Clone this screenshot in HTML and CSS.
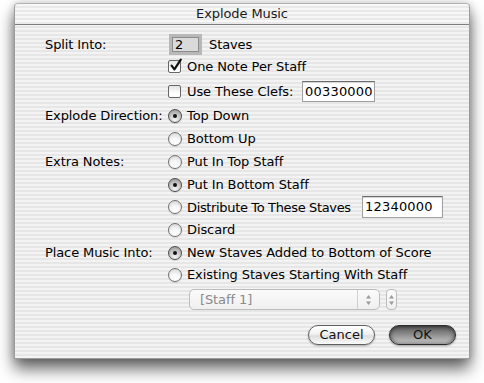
FILE: index.html
```html
<!DOCTYPE html>
<html>
<head>
<meta charset="utf-8">
<link rel="stylesheet" href="styles.css">
</head>
<body>
<div class="window">
  <div class="titlebar">Explode Music</div>
  <div class="content">
    <div class="form">
      <div class="label">Split Into:</div>
      <div class="ctl"><span class="field focus">2</span><span class="after">Staves</span></div>

      <div class="label"></div>
      <div class="ctl"><span class="check"><svg class="tick" width="14" height="14" viewBox="0 0 14 14"><path d="M2.6 6.6 L5.4 10.4 L11.8 0.6" fill="none" stroke="#111" stroke-width="2.2" stroke-linecap="round" stroke-linejoin="round"/></svg></span><span class="text">One Note Per Staff</span></div>

      <div class="label"></div>
      <div class="ctl"><span class="check"></span><span class="text w-clefs">Use These Clefs:</span><span class="field f-clefs">00330000</span></div>

      <div class="label">Explode Direction:</div>
      <div class="ctl"><span class="radio on"></span><span class="text r">Top Down</span></div>

      <div class="label"></div>
      <div class="ctl"><span class="radio"></span><span class="text r">Bottom Up</span></div>

      <div class="label">Extra Notes:</div>
      <div class="ctl"><span class="radio"></span><span class="text r">Put In Top Staff</span></div>

      <div class="label"></div>
      <div class="ctl"><span class="radio on"></span><span class="text r">Put In Bottom Staff</span></div>

      <div class="label"></div>
      <div class="ctl"><span class="radio"></span><span class="text r w-dist">Distribute To These Staves</span><span class="field f-dist">12340000</span></div>

      <div class="label"></div>
      <div class="ctl"><span class="radio"></span><span class="text r">Discard</span></div>

      <div class="label">Place Music Into:</div>
      <div class="ctl"><span class="radio on"></span><span class="text r">New Staves Added to Bottom of Score</span></div>

      <div class="label"></div>
      <div class="ctl"><span class="radio"></span><span class="text r">Existing Staves Starting With Staff</span></div>
    </div>

    <div class="popup-row">
      <div class="popup">
        <span class="popup-text">[Staff 1]</span>
        <span class="popup-arrows"><svg width="7" height="12" viewBox="0 0 7 12"><path d="M3.5 1 L6 4.5 L1 4.5 Z M3.5 11 L6 7.5 L1 7.5 Z" fill="#9a9a9a"/></svg></span>
      </div>
      <div class="stepper"><svg width="7" height="14" viewBox="0 0 7 14"><path d="M3.5 2 L6 5.5 L1 5.5 Z M3.5 12 L6 8.5 L1 8.5 Z" fill="#9a9a9a"/></svg></div>
    </div>

    <div class="buttons">
      <div class="btn cancel">Cancel</div>
      <div class="btn ok">OK</div>
    </div>
  </div>
</div>
</body>
</html>
```
FILE: styles.css
```css
html, body {
  margin: 0;
  padding: 0;
  background: #ffffff;
}
body {
  width: 484px;
  height: 383px;
  overflow: hidden;
  font-family: "DejaVu Sans", "Noto Sans", sans-serif;
  font-size: 13px;
  letter-spacing: -0.1px;
  color: #000;
}
.window {
  margin-left: 14px;
  margin-top: 3px;
  width: 456px;
  height: 356px;
  box-sizing: border-box;
  border: 1px solid #9c9c9c;
  border-top-color: #b4b4b4;
  background: repeating-linear-gradient(to bottom, #f3f3f3 0, #f3f3f3 2px, #e6e6e6 2px, #e6e6e6 4px);
  box-shadow: 0 10px 16px rgba(0,0,0,0.6), 0 0 8px rgba(0,0,0,0.2);
  border-radius: 4px 4px 0 0;
}
.titlebar {
  height: 20px;
  line-height: 20px;
  text-align: center;
  border-bottom: 1px solid #7c7c7c;
  color: #1a1a1a;
  background: repeating-linear-gradient(to bottom, #f7f7f7 0, #f7f7f7 2px, #e9e9e9 2px, #e9e9e9 4px);
  border-radius: 4px 4px 0 0;
}
.content {
  padding: 8px 13px 0 30px;
}
.form {
  display: grid;
  grid-template-columns: 123px 1fr;
  grid-template-rows: 22px 23px 26px 23px 23px 23px 23px 22px 23px 23px 21px;
  align-items: center;
}
.label {
  white-space: nowrap;
}
.ctl {
  display: flex;
  align-items: center;
  white-space: nowrap;
}
.field {
  box-sizing: border-box;
  height: 21px;
  line-height: 19px;
  background: #fff;
  border: 1px solid #a0a0a0;
  border-top-color: #6c6c6c;
  box-shadow: inset 0 1px 1px rgba(0,0,0,0.18);
  padding-left: 2px;
  letter-spacing: 0.2px;
  flex: none;
}
.field.focus {
  margin-left: 1px;
  width: 33px;
  border: 3px solid #b8b8b8;
  box-shadow: inset 0 0 0 1px #8c8c8c;
  background: #dadada;
  line-height: 15px;
  padding-left: 3px;
}
.after {
  margin-left: 7px;
}
.f-clefs {
  width: 73px;
}
.f-dist {
  width: 81px;
  height: 22px;
  line-height: 20px;
}
.check {
  position: relative;
  width: 13px;
  height: 13px;
  box-sizing: border-box;
  border: 1px solid #666;
  border-radius: 2px;
  background: linear-gradient(#e4e4e4, #ffffff 70%);
  flex: none;
}
.tick {
  position: absolute;
  left: 0;
  top: -2px;
  overflow: visible;
}
.text {
  margin-left: 6px;
}
.text.r {
  margin-left: 5px;
}
.w-clefs {
  width: 115px;
  flex: none;
}
.w-dist {
  width: 175px;
  flex: none;
  letter-spacing: -0.35px;
}
.radio {
  width: 14px;
  height: 14px;
  box-sizing: border-box;
  border-radius: 50%;
  border: 1px solid #707070;
  background: radial-gradient(circle at 50% 85%, #ffffff 0, #f6f6f6 45%, #cfcfcf 100%);
  box-shadow: 0 1px 1px rgba(0,0,0,0.12);
  display: flex;
  align-items: center;
  justify-content: center;
  flex: none;
}
.radio.on {
  border-color: #4e4e4e;
  background: radial-gradient(circle at 50% 85%, #f4f4f4 0, #c8c8c8 50%, #8c8c8c 100%);
}
.radio.on::after {
  content: "";
  width: 4px;
  height: 4px;
  border-radius: 50%;
  background: #111;
}
.popup-row {
  display: flex;
  margin-top: 4px;
  padding-left: 144px;
  height: 21px;
}
.popup {
  width: 191px;
  height: 21px;
  box-sizing: border-box;
  border: 1px solid #bcbcbc;
  border-radius: 5px;
  background: linear-gradient(#fbfbfb, #efefef);
  display: flex;
  align-items: center;
}
.popup-text {
  flex: 1;
  padding-left: 10px;
  color: #8a8a8a;
}
.popup-arrows {
  width: 21px;
  height: 19px;
  border-left: 1px solid #d0d0d0;
  display: flex;
  align-items: center;
  justify-content: center;
}
.stepper {
  margin-left: 6px;
  width: 11px;
  height: 21px;
  box-sizing: border-box;
  border: 1px solid #bcbcbc;
  border-radius: 4px;
  background: linear-gradient(#fbfbfb, #efefef);
  display: flex;
  align-items: center;
  justify-content: center;
}
.buttons {
  display: flex;
  justify-content: flex-end;
  gap: 14px;
  margin-top: 15px;
}
.btn {
  width: 67px;
  height: 20px;
  box-sizing: border-box;
  border-radius: 10px;
  text-align: center;
  line-height: 18px;
  color: #111;
  letter-spacing: 0;
}
.cancel {
  border: 1px solid #5f5f5f;
  background: linear-gradient(#ffffff 0, #f1f1f1 45%, #dedede 55%, #fbfbfb 100%);
  box-shadow: 0 1px 2px rgba(0,0,0,0.3);
}
.ok {
  border: 1px solid #2a2a2a;
  background: linear-gradient(#555 0, #7a7a7a 30%, #9c9c9c 60%, #cfcfcf 100%);
  box-shadow: inset 0 0 4px rgba(0,0,0,0.6), 0 1px 2px rgba(0,0,0,0.35);
}
```
